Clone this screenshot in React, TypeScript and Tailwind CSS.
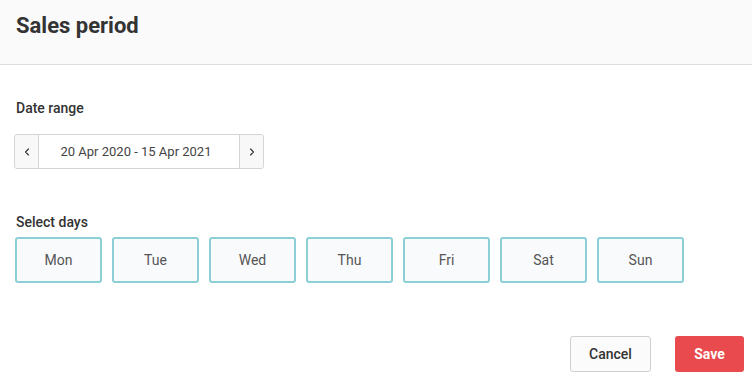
import { ChevronLeft, ChevronRight } from 'lucide-react';

const days = ['Mon', 'Tue', 'Wed', 'Thu', 'Fri', 'Sat', 'Sun'];

export default function App() {
  return (
    <div className="w-[752px] h-[381px] bg-white font-['Roboto',sans-serif] text-[#333] overflow-hidden">
      {/* Header */}
      <div className="h-[65px] bg-[#fafafa] border-b border-[#dedede] px-4 pt-[12px]">
        <h1 className="text-[22px] leading-7 font-bold text-[#333]">Sales period</h1>
      </div>

      <div className="pl-[15px] pt-[33px]">
        <div className="text-sm leading-5 font-medium text-[#333] pl-px">Date range</div>

        {/* Date picker */}
        <div className="mt-4 flex w-[250px] h-[35px] border border-[#d5d5d5] rounded-[3px] text-[#333] -ml-px">
          <button className="w-6 flex items-center justify-center bg-[#f8f8f8] border-r border-[#d5d5d5] rounded-l-[3px]">
            <ChevronLeft size={12} strokeWidth={2.25} />
          </button>
          <div className="flex-1 flex items-center justify-center pr-[6px] text-[13px] text-[#444] bg-white">
            20 Apr 2020 - 15 Apr 2021
          </div>
          <button className="w-6 flex items-center justify-center bg-[#f8f8f8] border-l border-[#d5d5d5] rounded-r-[3px]">
            <ChevronRight size={12} strokeWidth={2.25} />
          </button>
        </div>

        <div className="mt-[43px] text-sm leading-5 font-medium text-[#333] pl-px">Select days</div>

        <div className="mt-[5px] flex gap-[10px]">
          {days.map((d) => (
            <button
              key={d}
              className="w-[87px] h-[46px] rounded-[3px] border-2 border-[#8ccfd6] bg-[#f9fafc] text-sm text-[#555] flex items-center justify-center"
            >
              {d}
            </button>
          ))}
        </div>
      </div>

      {/* Footer */}
      <div className="mt-[53px] flex justify-end gap-6 pr-2">
        <button className="w-[81px] h-[36px] rounded-[3px] border border-[#d0d0d0] bg-[#fbfbfb] text-sm font-medium text-[#333] pb-px">
          Cancel
        </button>
        <button className="w-[69px] h-[36px] rounded-[3px] bg-[#e84a4d] text-sm font-bold text-white pb-px">
          Save
        </button>
      </div>
    </div>
  );
}
